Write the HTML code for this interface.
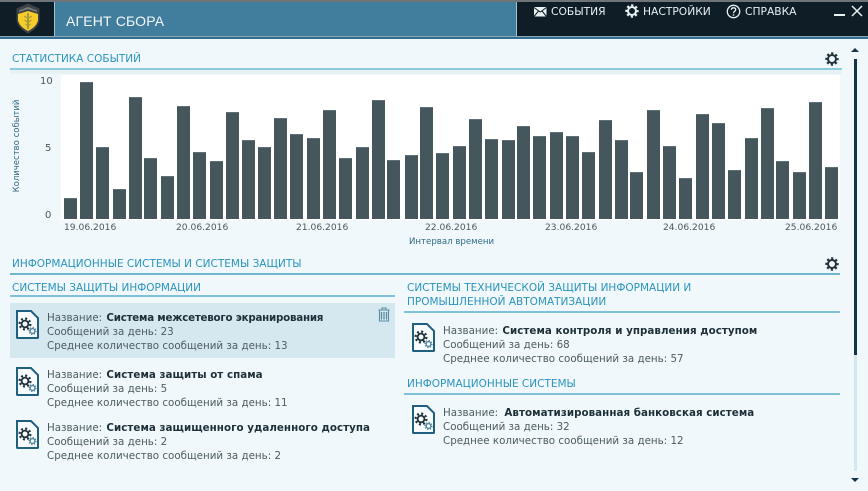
<!DOCTYPE html>
<html lang="ru"><head><meta charset="utf-8"><title>Агент сбора</title>
<style>
html,body{margin:0;padding:0}
body{width:868px;height:491px;overflow:hidden;position:relative;background:#f0f8fb;font-family:"DejaVu Sans","Liberation Sans",sans-serif;color:#4a5a60}
.a{position:absolute}
.t{position:absolute;white-space:nowrap;line-height:14px;font-size:10.3px;color:#4d5c62;filter:blur(.25px)}
.t b{color:#1d2f38;font-weight:bold;margin-left:1px;letter-spacing:.04px}
.h{position:absolute;white-space:nowrap;line-height:14px;font-size:10.5px;color:#2b93bd;filter:blur(.2px)}
.n{position:absolute;white-space:nowrap;line-height:14px;font-size:10.7px;color:#e8f0f2;top:5px}
.d{position:absolute;white-space:nowrap;line-height:12px;font-size:9.15px;color:#4a5a60;top:222px}
.y{position:absolute;white-space:nowrap;line-height:12px;font-size:10px;color:#4a5a60}
.b{position:absolute;width:13px;background:#46565d;border:0 solid #5e7078;border-top-width:1px;box-sizing:border-box;bottom:272px}
svg{position:absolute;overflow:visible}
</style></head>
<body>
<svg width="0" height="0" style="position:absolute"><defs>
<symbol id="gear" viewBox="0 0 14 14" overflow="visible"><circle cx="7" cy="7" r="4" fill="none" stroke="currentColor" stroke-width="2"/><circle cx="7" cy="7" r="5.4" fill="none" stroke="currentColor" stroke-width="2.6" stroke-dasharray="2.1 2.14" stroke-dashoffset="1"/></symbol>
<symbol id="doc" viewBox="0 0 23 29" overflow="visible"><path d="M1 1H15L22 8V27.500Q22 28 21.500 28H1.500Q1 28 1 27.500Z" fill="#f7fbfd" stroke="#1f5f80" stroke-width="2"/><circle cx="9" cy="14" r="3.400" fill="none" stroke="#1d2f38" stroke-width="1.800"/><circle cx="9" cy="14" r="5.400" fill="none" stroke="#1d2f38" stroke-width="2.200" stroke-dasharray="2 2.240"/><circle cx="16.500" cy="21" r="2.400" fill="none" stroke="#4a7f98" stroke-width="1.300"/><circle cx="16.500" cy="21" r="3.500" fill="none" stroke="#4a7f98" stroke-width="1.200" stroke-dasharray="1.300 1.450"/></symbol>
</defs></svg>

<!-- header -->
<div class="a" style="left:0;top:0;width:868px;height:37px;background:#0f1e26"></div>
<div class="a" style="left:0;top:0;width:868px;height:2px;background:#6f7478"></div>
<div class="a" style="left:54px;top:2px;width:463px;height:35px;background:#417d9c;border-left:1px solid #9fc3d3;border-right:1px solid #9fc3d3;box-sizing:border-box"></div>
<div class="a" style="left:0;top:36px;width:868px;height:1px;background:#8fa9b5"></div>
<div class="a" style="left:0;top:37px;width:868px;height:2px;background:#2f6e90"></div>
<div class="a" style="left:66px;top:12px;font-size:14px;line-height:18px;color:#f2f7f9;white-space:nowrap;font-family:'Liberation Sans',sans-serif;letter-spacing:.15px">АГЕНТ СБОРА</div>
<svg style="left:15px;top:3px" width="26" height="31" viewBox="0 0 26 31"><path d="M13 0.500L24.500 5.500V17Q23.500 25 13 30.500Q2.500 25 1.500 17V5.500Z" fill="#3e4244"/><path d="M13 4L22 7.500V9L13 6L4 9V7.500Z" fill="#7a7e80"/><path d="M13 8L23 11V17Q22 23.500 13 28Q4 23.500 3 17V11Z" fill="#f5cc2a"/><path d="M13 10V26" stroke="#a89a3a" stroke-width="2"/><path d="M9 13L13 15.500L17 13M9.500 17L13 19.500L16.500 17M10.500 21L13 23L15.500 21" fill="none" stroke="#a89a3a" stroke-width="1.100"/></svg>

<svg style="left:534px;top:7px" width="13" height="10" viewBox="0 0 13 10"><rect width="12.500" height="9.500" fill="#e8f0f2"/><path d="M0 0.500L6.250 5L12.500 0.500M0 9.500L4.500 4M12.500 9.500L8 4" fill="none" stroke="#0f1e26" stroke-width="1"/></svg>
<div class="n" style="left:551px">СОБЫТИЯ</div>
<svg style="left:625px;top:4px;color:#e8f0f2" width="14" height="14"><use href="#gear"/></svg>
<div class="n" style="left:643px">НАСТРОЙКИ</div>
<svg style="left:726px;top:4px" width="15" height="15" viewBox="0 0 15 15"><circle cx="7.500" cy="7.500" r="6.200" fill="none" stroke="#e8f0f2" stroke-width="1.300"/><path d="M5.300 5.800Q5.500 3.800 7.500 3.800Q9.700 3.800 9.700 5.600Q9.700 6.700 8.500 7.400Q7.500 8 7.500 9.200" fill="none" stroke="#e8f0f2" stroke-width="1.300"/><rect x="6.800" y="10.300" width="1.400" height="1.400" fill="#e8f0f2"/></svg>
<div class="n" style="left:745px">СПРАВКА</div>
<div class="a" style="left:834px;top:14px;width:11px;height:1.500px;background:#e8f0f2"></div>
<svg style="left:851px;top:5px" width="12" height="12"><path d="M1 1L11 11M11 1L1 11" stroke="#e8f0f2" stroke-width="1.500"/></svg>

<!-- statistics -->
<div class="h" style="left:12px;top:52px">СТАТИСТИКА СОБЫТИЙ</div>
<svg style="left:825px;top:52px;color:#22343d" width="14" height="14"><use href="#gear"/></svg>
<div class="a" style="left:10px;top:68px;width:832px;height:1.500px;background:#8ccbdd"></div>
<div class="a" style="left:10px;top:70px;width:832px;height:4px;background:#e6f2f6"></div>
<div class="a" style="left:61px;top:75px;width:779px;height:145px;background:#fff"></div>

<div class="y" style="left:40px;top:76px">10</div>
<div class="y" style="left:45px;top:143px">5</div>
<div class="y" style="left:45px;top:210px">0</div>
<div class="y" style="left:17px;top:146px;font-size:8.500px;color:#2f6a85;transform:translate(-50%,-50%) rotate(-90deg)">Количество событий</div>

<div class="b" style="left:64px;height:21px"></div>
<div class="b" style="left:80px;height:137px"></div>
<div class="b" style="left:96px;height:72px"></div>
<div class="b" style="left:113px;height:30px"></div>
<div class="b" style="left:129px;height:122px"></div>
<div class="b" style="left:144px;height:61px"></div>
<div class="b" style="left:161px;height:43px"></div>
<div class="b" style="left:177px;height:113px"></div>
<div class="b" style="left:193px;height:67px"></div>
<div class="b" style="left:210px;height:58px"></div>
<div class="b" style="left:226px;height:107px"></div>
<div class="b" style="left:242px;height:79px"></div>
<div class="b" style="left:258px;height:72px"></div>
<div class="b" style="left:274px;height:101px"></div>
<div class="b" style="left:290px;height:85px"></div>
<div class="b" style="left:307px;height:81px"></div>
<div class="b" style="left:323px;height:109px"></div>
<div class="b" style="left:339px;height:61px"></div>
<div class="b" style="left:356px;height:72px"></div>
<div class="b" style="left:372px;height:119px"></div>
<div class="b" style="left:387px;height:59px"></div>
<div class="b" style="left:405px;height:64px"></div>
<div class="b" style="left:420px;height:112px"></div>
<div class="b" style="left:436px;height:66px"></div>
<div class="b" style="left:453px;height:73px"></div>
<div class="b" style="left:469px;height:100px"></div>
<div class="b" style="left:485px;height:80px"></div>
<div class="b" style="left:502px;height:79px"></div>
<div class="b" style="left:517px;height:93px"></div>
<div class="b" style="left:533px;height:83px"></div>
<div class="b" style="left:550px;height:87px"></div>
<div class="b" style="left:566px;height:83px"></div>
<div class="b" style="left:582px;height:67px"></div>
<div class="b" style="left:599px;height:99px"></div>
<div class="b" style="left:615px;height:79px"></div>
<div class="b" style="left:630px;height:47px"></div>
<div class="b" style="left:647px;height:109px"></div>
<div class="b" style="left:663px;height:73px"></div>
<div class="b" style="left:679px;height:41px"></div>
<div class="b" style="left:696px;height:105px"></div>
<div class="b" style="left:712px;height:96px"></div>
<div class="b" style="left:728px;height:49px"></div>
<div class="b" style="left:745px;height:81px"></div>
<div class="b" style="left:761px;height:111px"></div>
<div class="b" style="left:776px;height:58px"></div>
<div class="b" style="left:793px;height:47px"></div>
<div class="b" style="left:809px;height:117px"></div>
<div class="b" style="left:825px;height:52px"></div>

<div class="d" style="left:64px">19.06.2016</div>
<div class="d" style="left:176px">20.06.2016</div>
<div class="d" style="left:296px">21.06.2016</div>
<div class="d" style="left:425px">22.06.2016</div>
<div class="d" style="left:545px">23.06.2016</div>
<div class="d" style="left:663px">24.06.2016</div>
<div class="d" style="left:785px">25.06.2016</div>
<div class="d" style="left:409px;top:236px;font-size:8.600px;color:#2f6a85">Интервал времени</div>

<!-- systems -->
<div class="h" style="left:12px;top:257px">ИНФОРМАЦИОННЫЕ СИСТЕМЫ И СИСТЕМЫ ЗАЩИТЫ</div>
<svg style="left:825px;top:257px;color:#22343d" width="14" height="14"><use href="#gear"/></svg>
<div class="a" style="left:10px;top:273px;width:830px;height:1.500px;background:#6db7d3"></div>

<div class="h" style="left:12px;top:281px">СИСТЕМЫ ЗАЩИТЫ ИНФОРМАЦИИ</div>
<div class="a" style="left:10px;top:295px;width:385px;height:1.500px;background:#7fc0da"></div>
<div class="a" style="left:10px;top:303px;width:385px;height:55px;background:#d5e8ef"></div>
<svg style="left:378px;top:307px" width="12" height="15" viewBox="0 0 12 15"><path d="M0.500 3H11.500M4 3V1H8V3M1.500 3.500V14H10.500V3.500" fill="none" stroke="#5b8ea5" stroke-width="1.100"/><path d="M3.500 5V12.500M6 5V12.500M8.500 5V12.500" stroke="#5b8ea5" stroke-width="1.300"/></svg>

<svg style="left:16px;top:310px" width="23" height="29"><use href="#doc"/></svg>
<div class="t" style="left:47px;top:311px">Название: <b style="letter-spacing:-.24px">Система межсетевого экранирования</b></div>
<div class="t" style="left:47px;top:325px">Сообщений за день: 23</div>
<div class="t" style="left:47px;top:339px">Среднее количество сообщений за день: 13</div>

<svg style="left:16px;top:367px" width="23" height="29"><use href="#doc"/></svg>
<div class="t" style="left:47px;top:368px">Название: <b>Система защиты от спама</b></div>
<div class="t" style="left:47px;top:382px">Сообщений за день: 5</div>
<div class="t" style="left:47px;top:396px">Среднее количество сообщений за день: 11</div>

<svg style="left:16px;top:420px" width="23" height="29"><use href="#doc"/></svg>
<div class="t" style="left:47px;top:421px">Название: <b>Система защищенного удаленного доступа</b></div>
<div class="t" style="left:47px;top:435px">Сообщений за день: 2</div>
<div class="t" style="left:47px;top:449px">Среднее количество сообщений за день: 2</div>

<div class="h" style="left:407px;top:281px">СИСТЕМЫ ТЕХНИЧЕСКОЙ ЗАЩИТЫ ИНФОРМАЦИИ И</div>
<div class="h" style="left:407px;top:295px">ПРОМЫШЛЕННОЙ АВТОМАТИЗАЦИИ</div>
<div class="a" style="left:404px;top:311px;width:436px;height:1.500px;background:#7fc0da"></div>

<svg style="left:412px;top:323px" width="23" height="29"><use href="#doc"/></svg>
<div class="t" style="left:443px;top:324px">Название: <b>Система контроля и управления доступом</b></div>
<div class="t" style="left:443px;top:338px">Сообщений за день: 68</div>
<div class="t" style="left:443px;top:352px">Среднее количество сообщений за день: 57</div>

<div class="h" style="left:407px;top:377px">ИНФОРМАЦИОННЫЕ СИСТЕМЫ</div>
<div class="a" style="left:404px;top:393px;width:436px;height:1.500px;background:#7fc0da"></div>

<svg style="left:412px;top:405px" width="23" height="29"><use href="#doc"/></svg>
<div class="t" style="left:443px;top:406px">Название: <b style="margin-left:3px">Автоматизированная банковская система</b></div>
<div class="t" style="left:443px;top:420px">Сообщений за день: 32</div>
<div class="t" style="left:443px;top:434px">Среднее количество сообщений за день: 12</div>

<!-- scrollbar -->
<div class="a" style="left:854px;top:59px;width:3px;height:296px;background:#12344c"></div>
<div class="a" style="left:854px;top:355px;width:3px;height:116px;background:#d3e7ef"></div>
<svg style="left:851px;top:47px" width="9" height="6"><path d="M0 5H8L4 1Z" fill="#12344c"/></svg>
<svg style="left:851px;top:477px" width="9" height="6"><path d="M0 1H8L4 5Z" fill="#12344c"/></svg>
</body></html>
